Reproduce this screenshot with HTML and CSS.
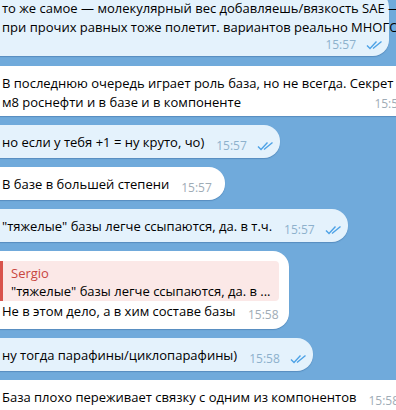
FILE: index.html
```html
<!DOCTYPE html>
<html lang="ru">
<head>
  <meta charset="UTF-8">
  <meta name="viewport" content="width=device-width, initial-scale=1.0">
  <title>Чат</title>
  <link rel="stylesheet" href="styles.css">
</head>
<body>
  <div class="chat">
    <!-- первое сообщение обрезано сверху -->
    <div class="msg out first">
      <div class="text">то же самое — молекулярный вес добавляешь/вязкость SAE —<br>при прочих равных тоже полетит. вариантов реально МНОГО</div>
      <div class="meta meta-row">
        <span class="time">15:57</span>
        <svg class="checks" width="17" height="10" viewBox="0 0 17 10"><path d="M1 5.5 L4 8.5 L10.5 1.5 M7 8.5 L15.5 1.5" /></svg>
      </div>
    </div>

    <div class="msg in second">
      <div class="text">В последнюю очередь играет роль база, но не всегда. Секрет<br>м8 роснефти и в базе и в компоненте</div>
      <div class="meta meta-over">
        <span class="time">15:57</span>
      </div>
    </div>

    <div class="msg out">
      <div class="text">но если у тебя +1 = ну круто, чо)</div>
      <div class="meta">
        <span class="time">15:57</span>
        <svg class="checks" width="17" height="10" viewBox="0 0 17 10"><path d="M1 5.5 L4 8.5 L10.5 1.5 M7 8.5 L15.5 1.5" /></svg>
      </div>
    </div>

    <div class="msg in">
      <div class="text">В базе в большей степени</div>
      <div class="meta">
        <span class="time">15:57</span>
      </div>
    </div>

    <div class="msg out">
      <div class="text">"тяжелые" базы легче ссыпаются, да. в т.ч.</div>
      <div class="meta">
        <span class="time">15:57</span>
        <svg class="checks" width="17" height="10" viewBox="0 0 17 10"><path d="M1 5.5 L4 8.5 L10.5 1.5 M7 8.5 L15.5 1.5" /></svg>
      </div>
    </div>

    <div class="msg in reply-msg">
      <div class="reply">
        <div class="reply-name">Sergio</div>
        <div class="reply-text">"тяжелые" базы легче ссыпаются, да. в ...</div>
      </div>
      <div class="line">
        <div class="text">Не в этом дело, а в хим составе базы</div>
        <div class="meta">
          <span class="time">15:58</span>
        </div>
      </div>
    </div>

    <div class="msg out">
      <div class="text">ну тогда парафины/циклопарафины)</div>
      <div class="meta">
        <span class="time">15:58</span>
        <svg class="checks" width="17" height="10" viewBox="0 0 17 10"><path d="M1 5.5 L4 8.5 L10.5 1.5 M7 8.5 L15.5 1.5" /></svg>
      </div>
    </div>

    <div class="msg in">
      <div class="text">База плохо переживает связку с одним из компонентов</div>
      <div class="meta">
        <span class="time">15:58</span>
      </div>
    </div>
  </div>
</body>
</html>
```

FILE: styles.css
```css
body {
  margin: 0;
  width: 396px;
  height: 410px;
  overflow: hidden;
  background-color: #70aadb;
  font-family: "Open Sans", Arial, sans-serif;
  font-size: 13px;
  color: #000;
}

.chat {
  display: flex;
  flex-direction: column;
  align-items: flex-start;
  gap: 9px;
  overflow: hidden;
}

/* пузырь сообщения, левый край уходит за окно */
.msg {
  display: flex;
  align-items: flex-end;
  margin-left: -30px;
  padding: 8px 13px 6px 32px;
  border-radius: 16px;
  box-shadow: 0 1px 1px rgba(40, 90, 140, 0.35);
  line-height: 19px;
  white-space: nowrap;
}

.msg.in {
  background: #fff;
}

.msg.out {
  background: #e4f2fc;
  padding-right: 6px;
}

.msg.first {
  flex-direction: column;
  align-items: flex-start;
  margin-top: -9px;
  margin-bottom: 1px;
  width: 381px;
  padding-bottom: 5px;
}

.msg.second {
  flex-direction: column;
  align-items: flex-start;
  width: 403px;
}

.meta {
  display: flex;
  align-items: center;
  margin-left: 12px;
  margin-bottom: -2px;
  font-size: 12px;
  line-height: 16px;
}

.meta-row,
.meta-over {
  align-self: stretch;
  justify-content: flex-end;
}

.meta-over {
  margin-top: -16px;
}

.time {
  color: #a0acb6;
}

.out .time {
  color: #8db1cc;
}

.checks {
  margin-left: 10px;
}

.checks path {
  fill: none;
  stroke: #4da2e6;
  stroke-width: 1.4;
}

.reply-msg {
  flex-direction: column;
  align-items: stretch;
  padding-top: 10px;
  padding-right: 10px;
  padding-bottom: 8px;
}

.reply {
  margin-left: -2px;
  padding: 3px 8px 1px 8px;
  border-left: 3px solid #d9534c;
  border-radius: 0 4px 4px 0;
  background: #fbe8e7;
  line-height: 18px;
}

.reply-name {
  color: #c8463e;
}

.line {
  display: flex;
  align-items: flex-end;
  margin-top: 1px;
}

.line .text {
  flex: 1;
}
```
